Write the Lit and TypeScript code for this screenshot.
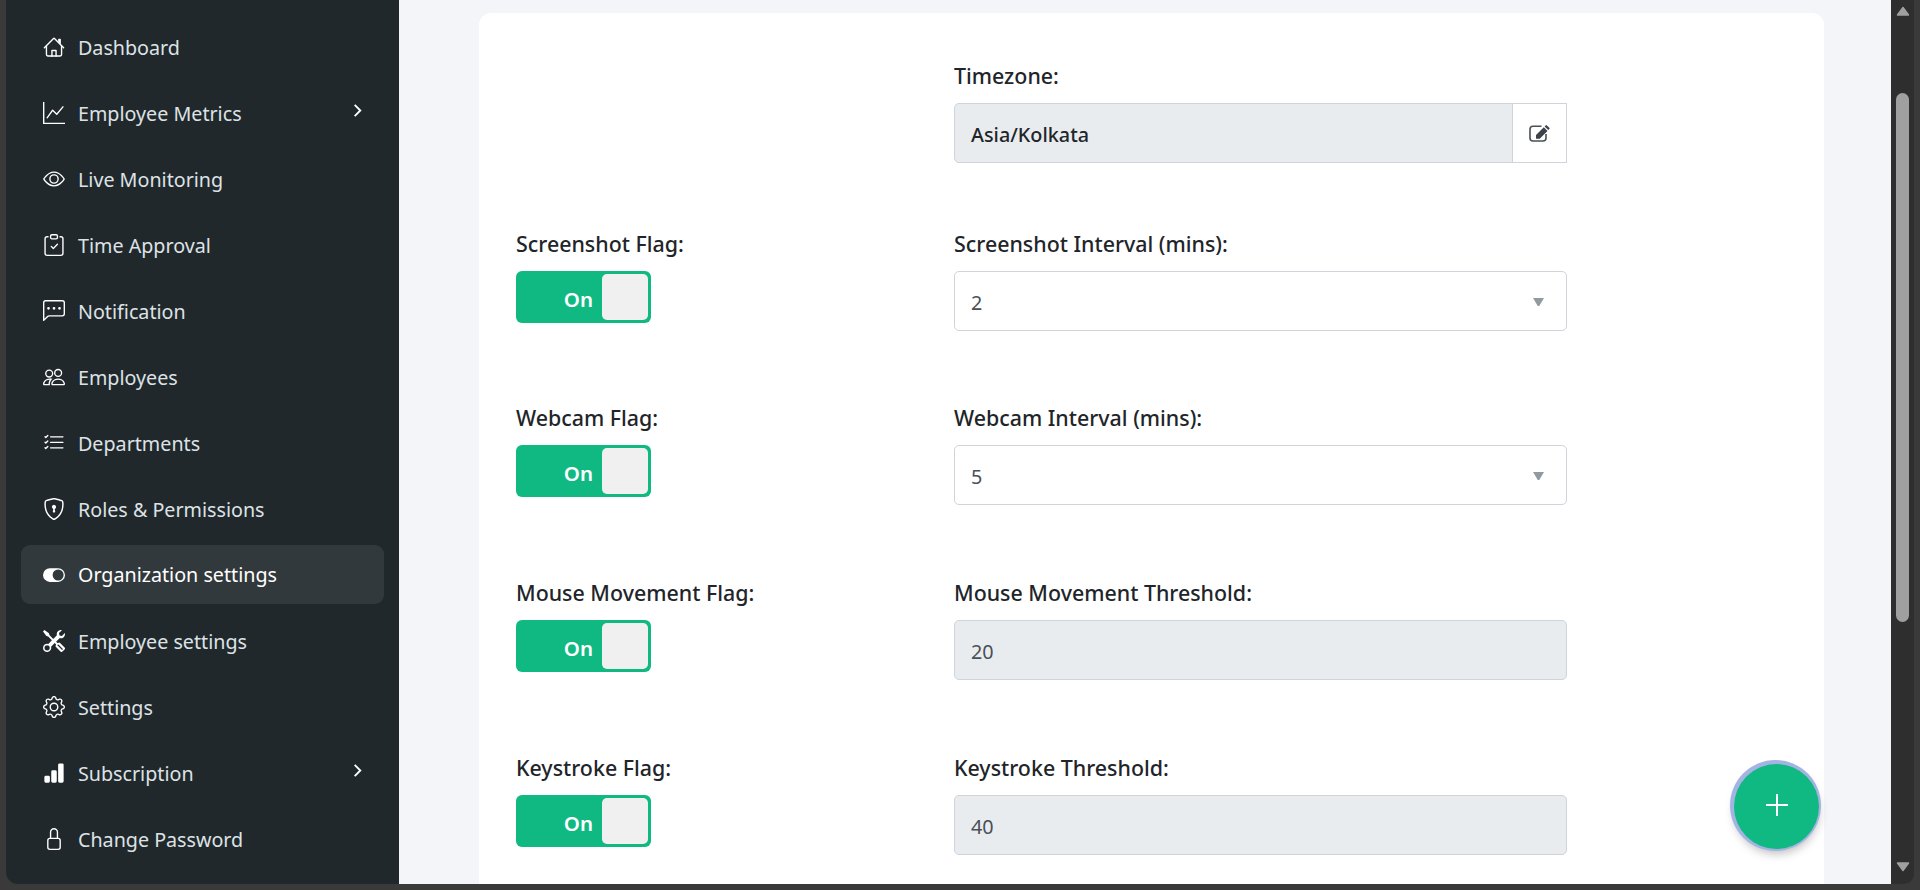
import { LitElement, css, html, svg } from "lit";
import { customElement } from "lit/decorators.js";

const icons: Record<string, unknown> = {
  house: svg`<path fill-rule="evenodd" d="M2 13.5V7h1v6.5a.5.5 0 0 0 .5.5h9a.5.5 0 0 0 .5-.5V7h1v6.5a1.5 1.5 0 0 1-1.5 1.5h-9A1.5 1.5 0 0 1 2 13.5zm11-11V6l-2-2V2.5a.5.5 0 0 1 .5-.5h1a.5.5 0 0 1 .5.5z"/><path fill-rule="evenodd" d="M7.293 1.5a1 1 0 0 1 1.414 0l6.647 6.646a.5.5 0 0 1-.708.708L8 2.207 1.354 8.854a.5.5 0 1 1-.708-.708L7.293 1.5z"/><path d="M6 15v-4.5a.5.5 0 0 1 .5-.5h3a.5.5 0 0 1 .5.5V15H9v-4H7v4z"/>`,
  graph: svg`<path fill-rule="evenodd" d="M0 0h1v15h15v1H0V0Zm14.817 3.113a.5.5 0 0 1 .07.704l-4.5 5.5a.5.5 0 0 1-.74.037L7.06 6.767l-3.656 5.027a.5.5 0 0 1-.808-.588l4-5.5a.5.5 0 0 1 .758-.06l2.609 2.61 4.15-5.073a.5.5 0 0 1 .704-.07Z"/>`,
  eye: svg`<path d="M16 8s-3-5.5-8-5.5S0 8 0 8s3 5.5 8 5.5S16 8 16 8zM1.173 8a13.133 13.133 0 0 1 1.66-2.043C4.12 4.668 5.88 3.5 8 3.5c2.12 0 3.879 1.168 5.168 2.457A13.133 13.133 0 0 1 14.828 8c-.058.087-.122.183-.195.288-.335.48-.83 1.12-1.465 1.755C11.879 11.332 10.119 12.5 8 12.5c-2.12 0-3.879-1.168-5.168-2.457A13.134 13.134 0 0 1 1.172 8z"/><path d="M8 5.5a2.5 2.5 0 1 0 0 5 2.5 2.5 0 0 0 0-5zM4.5 8a3.5 3.5 0 1 1 7 0 3.5 3.5 0 0 1-7 0z"/>`,
  clipboard: svg`<path fill-rule="evenodd" d="M10.854 7.146a.5.5 0 0 1 0 .708l-3 3a.5.5 0 0 1-.708 0l-1.5-1.5a.5.5 0 1 1 .708-.708L7.5 9.793l2.646-2.647a.5.5 0 0 1 .708 0z"/><path d="M4 1.5H3a2 2 0 0 0-2 2V14a2 2 0 0 0 2 2h10a2 2 0 0 0 2-2V3.5a2 2 0 0 0-2-2h-1v1h1a1 1 0 0 1 1 1V14a1 1 0 0 1-1 1H3a1 1 0 0 1-1-1V3.5a1 1 0 0 1 1-1h1v-1z"/><path d="M9.5 1a.5.5 0 0 1 .5.5v1a.5.5 0 0 1-.5.5h-3a.5.5 0 0 1-.5-.5v-1a.5.5 0 0 1 .5-.5h3zm-3-1A1.5 1.5 0 0 0 5 1.5v1A1.5 1.5 0 0 0 6.5 4h3A1.5 1.5 0 0 0 11 2.5v-1A1.5 1.5 0 0 0 9.5 0h-3z"/>`,
  chat: svg`<path d="M14 1a1 1 0 0 1 1 1v8a1 1 0 0 1-1 1H4.414A2 2 0 0 0 3 11.586l-2 2V2a1 1 0 0 1 1-1h12zM2 0a2 2 0 0 0-2 2v12.793a.5.5 0 0 0 .854.353l2.853-2.853A1 1 0 0 1 4.414 12H14a2 2 0 0 0 2-2V2a2 2 0 0 0-2-2H2z"/><path d="M5 6a1 1 0 1 1-2 0 1 1 0 0 1 2 0zm4 0a1 1 0 1 1-2 0 1 1 0 0 1 2 0zm4 0a1 1 0 1 1-2 0 1 1 0 0 1 2 0z"/>`,
  people: svg`<path d="M15 14s1 0 1-1-1-4-5-4-5 3-5 4 1 1 1 1h8Zm-7.978-1A.261.261 0 0 1 7 12.996c.001-.264.167-1.03.76-1.72C8.312 10.629 9.282 10 11 10c1.717 0 2.687.63 3.24 1.276.593.69.758 1.457.76 1.72l-.008.002a.274.274 0 0 1-.014.002H7.022ZM11 7a2 2 0 1 0 0-4 2 2 0 0 0 0 4Zm3-2a3 3 0 1 1-6 0 3 3 0 0 1 6 0ZM6.936 9.28a5.88 5.88 0 0 0-1.23-.247A7.35 7.35 0 0 0 5 9c-4 0-5 3-5 4 0 .667.333 1 1 1h4.216A2.238 2.238 0 0 1 5 13c0-1.01.377-2.042 1.09-2.904.243-.294.526-.569.846-.816ZM4.92 10A5.493 5.493 0 0 0 4 13H1c0-.26.164-1.03.76-1.724.545-.636 1.492-1.256 3.16-1.275ZM1.5 5.5a3 3 0 1 1 6 0 3 3 0 0 1-6 0Zm3-2a2 2 0 1 0 0 4 2 2 0 0 0 0-4Z"/>`,
  checklist: svg`<path fill-rule="evenodd" d="M5 11.5a.5.5 0 0 1 .5-.5h9a.5.5 0 0 1 0 1h-9a.5.5 0 0 1-.5-.5zm0-4a.5.5 0 0 1 .5-.5h9a.5.5 0 0 1 0 1h-9a.5.5 0 0 1-.5-.5zm0-4a.5.5 0 0 1 .5-.5h9a.5.5 0 0 1 0 1h-9a.5.5 0 0 1-.5-.5zM3.854 2.146a.5.5 0 0 1 0 .708l-1.5 1.5a.5.5 0 0 1-.708 0l-.5-.5a.5.5 0 1 1 .708-.708L2 3.293l1.146-1.147a.5.5 0 0 1 .708 0zm0 4a.5.5 0 0 1 0 .708l-1.5 1.5a.5.5 0 0 1-.708 0l-.5-.5a.5.5 0 1 1 .708-.708L2 7.293l1.146-1.147a.5.5 0 0 1 .708 0zm0 4a.5.5 0 0 1 0 .708l-1.5 1.5a.5.5 0 0 1-.708 0l-.5-.5a.5.5 0 0 1 .708-.708l.146.147 1.146-1.147a.5.5 0 0 1 .708 0z"/>`,
  shield: svg`<path d="M5.338 1.59a61.44 61.44 0 0 0-2.837.856.481.481 0 0 0-.328.39c-.554 4.157.726 7.19 2.253 9.188a10.725 10.725 0 0 0 2.287 2.233c.346.244.652.42.893.533.12.057.218.095.293.118a.55.55 0 0 0 .101.025.615.615 0 0 0 .1-.025c.076-.023.174-.061.294-.118.24-.113.547-.29.893-.533a10.726 10.726 0 0 0 2.287-2.233c1.527-1.997 2.807-5.031 2.253-9.188a.48.48 0 0 0-.328-.39c-.651-.213-1.75-.56-2.837-.855C9.552 1.29 8.531 1.067 8 1.067c-.53 0-1.552.223-2.662.524zM5.072.56C6.157.265 7.31 0 8 0s1.843.265 2.928.56c1.11.3 2.229.655 2.887.87a1.54 1.54 0 0 1 1.044 1.262c.596 4.477-.787 7.795-2.465 9.99a11.775 11.775 0 0 1-2.517 2.453 7.159 7.159 0 0 1-1.048.625c-.28.132-.581.24-.829.24s-.548-.108-.829-.24a7.158 7.158 0 0 1-1.048-.625 11.777 11.777 0 0 1-2.517-2.453C1.928 10.487.545 7.169 1.141 2.692A1.54 1.54 0 0 1 2.185 1.43 62.456 62.456 0 0 1 5.072.56z"/><path d="M9.5 6.5a1.5 1.5 0 0 1-1 1.415l.385 1.99a.5.5 0 0 1-.491.595h-.788a.5.5 0 0 1-.49-.595l.384-1.99a1.5 1.5 0 1 1 2-1.415z"/>`,
  toggle: svg`<path d="M5 3a5 5 0 0 0 0 10h6a5 5 0 0 0 0-10H5zm6 9a4 4 0 1 1 0-8 4 4 0 0 1 0 8z"/>`,
  tools: svg`<path d="M1 0 0 1l2.2 3.081a1 1 0 0 0 .815.419h.07a1 1 0 0 1 .708.293l2.675 2.675-2.617 2.654A3.003 3.003 0 0 0 0 13a3 3 0 1 0 5.878-.851l2.654-2.617.968.968-.305.914a1 1 0 0 0 .242 1.023l3.27 3.27a.997.997 0 0 0 1.414 0l1.586-1.586a.997.997 0 0 0 0-1.414l-3.27-3.27a1 1 0 0 0-1.023-.242L10.5 9.5l-.96-.96 2.68-2.643A3.005 3.005 0 0 0 16 3c0-.269-.035-.53-.102-.777l-2.14 2.141L12 4l-.364-1.757L13.777.102a3 3 0 0 0-3.675 3.68L7.462 6.46 4.793 3.793a1 1 0 0 1-.293-.707v-.071a1 1 0 0 0-.419-.814L1 0Zm9.646 10.646a.5.5 0 0 1 .708 0l2.914 2.915a.5.5 0 0 1-.707.707l-2.915-2.914a.5.5 0 0 1 0-.708ZM3 11l.471.242.529.026.287.445.445.287.026.529L5 13l-.242.471-.026.529-.445.287-.287.445-.529.026L3 15l-.471-.242L2 14.732l-.287-.445L1.268 14l-.026-.529L1 13l.242-.471.026-.529.445-.287.287-.445.529-.026L3 11Z"/>`,
  gear: svg`<path d="M8 4.754a3.246 3.246 0 1 0 0 6.492 3.246 3.246 0 0 0 0-6.492zM5.754 8a2.246 2.246 0 1 1 4.492 0 2.246 2.246 0 0 1-4.492 0z"/><path d="M9.796 1.343c-.527-1.79-3.065-1.79-3.592 0l-.094.319a.873.873 0 0 1-1.255.52l-.292-.16c-1.64-.892-3.433.902-2.54 2.541l.159.292a.873.873 0 0 1-.52 1.255l-.319.094c-1.79.527-1.79 3.065 0 3.592l.319.094a.873.873 0 0 1 .52 1.255l-.16.292c-.892 1.64.901 3.434 2.541 2.54l.292-.159a.873.873 0 0 1 1.255.52l.094.319c.527 1.79 3.065 1.79 3.592 0l.094-.319a.873.873 0 0 1 1.255-.52l.292.16c1.64.893 3.434-.902 2.54-2.541l-.159-.292a.873.873 0 0 1 .52-1.255l.319-.094c1.79-.527 1.79-3.065 0-3.592l-.319-.094a.873.873 0 0 1-.52-1.255l.16-.292c.893-1.64-.902-3.433-2.541-2.54l-.292.159a.873.873 0 0 1-1.255-.52l-.094-.319zm-2.633.283c.246-.835 1.428-.835 1.674 0l.094.319a1.873 1.873 0 0 0 2.693 1.115l.291-.16c.764-.415 1.6.42 1.184 1.185l-.159.292a1.873 1.873 0 0 0 1.116 2.692l.318.094c.835.246.835 1.428 0 1.674l-.319.094a1.873 1.873 0 0 0-1.115 2.693l.16.291c.415.764-.42 1.6-1.185 1.184l-.291-.159a1.873 1.873 0 0 0-2.693 1.116l-.094.318c-.246.835-1.428.835-1.674 0l-.094-.319a1.873 1.873 0 0 0-2.692-1.115l-.292.16c-.764.415-1.6-.42-1.184-1.185l.159-.291A1.873 1.873 0 0 0 1.945 8.93l-.319-.094c-.835-.246-.835-1.428 0-1.674l.319-.094A1.873 1.873 0 0 0 3.06 4.377l-.16-.292c-.415-.764.42-1.6 1.185-1.184l.292.159a1.873 1.873 0 0 0 2.692-1.115l.094-.319z"/>`,
  bars: svg`<path d="M1 11a1 1 0 0 1 1-1h2a1 1 0 0 1 1 1v3a1 1 0 0 1-1 1H2a1 1 0 0 1-1-1v-3zm5-4a1 1 0 0 1 1-1h2a1 1 0 0 1 1 1v7a1 1 0 0 1-1 1H7a1 1 0 0 1-1-1V7zm5-5a1 1 0 0 1 1-1h2a1 1 0 0 1 1 1v12a1 1 0 0 1-1 1h-2a1 1 0 0 1-1-1V2z"/>`,
  lock: svg`<path d="M8 1a2 2 0 0 1 2 2v4H6V3a2 2 0 0 1 2-2zm3 6V3a3 3 0 0 0-6 0v4a2 2 0 0 0-2 2v5a2 2 0 0 0 2 2h6a2 2 0 0 0 2-2V9a2 2 0 0 0-2-2zM5 8h6a1 1 0 0 1 1 1v5a1 1 0 0 1-1 1H5a1 1 0 0 1-1-1V9a1 1 0 0 1 1-1z"/>`,
};

const menu = [
  { icon: "house", label: "Dashboard" },
  { icon: "graph", label: "Employee Metrics", more: true },
  { icon: "eye", label: "Live Monitoring" },
  { icon: "clipboard", label: "Time Approval" },
  { icon: "chat", label: "Notification" },
  { icon: "people", label: "Employees" },
  { icon: "checklist", label: "Departments" },
  { icon: "shield", label: "Roles & Permissions" },
  { icon: "toggle", label: "Organization settings", active: true },
  { icon: "tools", label: "Employee settings" },
  { icon: "gear", label: "Settings" },
  { icon: "bars", label: "Subscription", more: true },
  { icon: "lock", label: "Change Password" },
];

const rows = [
  { flag: "Screenshot Flag:", label: "Screenshot Interval (mins):", value: "2", select: true },
  { flag: "Webcam Flag:", label: "Webcam Interval (mins):", value: "5", select: true },
  { flag: "Mouse Movement Flag:", label: "Mouse Movement Threshold:", value: "20" },
  { flag: "Keystroke Flag:", label: "Keystroke Threshold:", value: "40" },
];

@customElement("app-root")
export class AppRoot extends LitElement {
  static styles = css`
    :host {
      display: block;
      height: 890px;
      overflow: hidden;
      background: #3a3a3a;
      font-family: "Noto Sans", "Open Sans", sans-serif;
    }

    .window {
      display: flex;
      height: 884px;
      padding-left: 6px;
      padding-right: 6px;
    }

    .sidebar {
      width: 393px;
      flex: none;
      box-sizing: border-box;
      background: #20282b;
      border-bottom-left-radius: 12px;
      padding: 14px 15px 0;
      display: flex;
      flex-direction: column;
    }

    .item {
      height: 66px;
      flex: none;
      display: flex;
      align-items: center;
      box-sizing: border-box;
      padding: 0 19px 0 22px;
      color: #dee2e6;
      font-size: 19.7px;
      border-radius: 9px;
    }

    .item.active {
      height: 59px;
      margin: 3px 0 4px;
      background: #32393c;
      color: #fff;
    }

    .item svg.ico {
      width: 22px;
      height: 22px;
      flex: none;
      margin-right: 13px;
      fill: #fff;
    }

    .item span {
      flex: 1;
    }

    .item svg.more {
      width: 15px;
      height: 15px;
      flex: none;
      fill: none;
      stroke: #fff;
      stroke-width: 2;
      margin-top: -6px;
    }

    .main {
      flex: 1;
      min-width: 0;
      position: relative;
      background: #f3f5f9;
      padding: 13px 67px 0 80px;
      overflow: hidden;
    }

    .card {
      background: #fff;
      border-radius: 12px;
      height: 1000px;
      padding: 51px 0 0 37px;
      box-sizing: border-box;
    }

    .row {
      display: flex;
      height: 175px;
    }

    .row.first {
      height: 168px;
    }

    .row:nth-child(2) {
      height: 174px;
    }

    .left {
      width: 438px;
      flex: none;
    }

    .right {
      width: 613px;
      flex: none;
    }

    label {
      display: block;
      height: 39px;
      line-height: 24px;
      font-size: 21.4px;
      font-weight: 500;
      color: #212529;
      white-space: nowrap;
    }

    .toggle {
      width: 135px;
      height: 52px;
      box-sizing: border-box;
      background: #10b981;
      border-radius: 6px;
      padding: 3px;
      display: flex;
      justify-content: flex-end;
      align-items: center;
      gap: 9px;
      color: #fff;
      font-size: 20.5px;
      font-weight: 600;
      line-height: 48px;
    }

    .toggle span {
      padding-top: 3px;
    }

    .knob {
      width: 46px;
      height: 46px;
      background: #f0f0f0;
      border-radius: 5px;
    }

    .control {
      height: 60px;
      box-sizing: border-box;
      border: 1px solid #ced4da;
      border-radius: 5px;
      padding: 2px 16px 0;
      display: flex;
      align-items: center;
      justify-content: space-between;
      font-size: 19.8px;
      color: #495057;
    }

    .control.off {
      background: #e9ecef;
    }

    .caret {
      width: 11px;
      height: 8px;
      margin-right: 6px;
      fill: #8f9aa3;
    }

    .group {
      display: flex;
      height: 60px;
    }

    .group .control {
      flex: 1;
      border-radius: 5px 0 0 5px;
      font-weight: 500;
      color: #212529;
    }

    .addon {
      width: 55px;
      flex: none;
      box-sizing: border-box;
      margin-left: -1px;
      border: 1px solid #ced4da;
      display: flex;
      align-items: center;
      justify-content: center;
    }

    .addon svg {
      width: 21px;
      height: 17px;
    }

    .fab {
      position: absolute;
      left: 1335px;
      top: 764px;
      width: 85px;
      height: 85px;
      border-radius: 50%;
      background: #10b981;
      box-shadow: -1px -1px 0 3px #a3b4e2, 0 5px 10px rgba(0, 0, 0, 0.25);
      display: flex;
      align-items: center;
      justify-content: center;
    }

    .fab svg {
      width: 22px;
      height: 22px;
      stroke: #fff;
      stroke-width: 2;
      margin-bottom: 3px;
    }

    .scrollbar {
      width: 23px;
      flex: none;
      background: #2e2e2e;
      border-bottom-right-radius: 10px;
      position: relative;
    }

    .arrow {
      position: absolute;
      left: 5px;
      width: 14px;
      height: 10px;
      fill: #a0a0a0;
      stroke: #a0a0a0;
      stroke-width: 1.5;
      stroke-linejoin: round;
    }

    .arrow.up {
      top: 6px;
    }

    .arrow.down {
      top: 862px;
    }

    .thumb {
      position: absolute;
      left: 5px;
      top: 93px;
      width: 13px;
      height: 529px;
      border-radius: 7px;
      background: #a0a0a0;
    }
  `;

  private renderItem(item: (typeof menu)[number]) {
    return html`<div class="item ${item.active ? "active" : ""}">
      <svg class="ico" viewBox="0 0 16 16">${icons[item.icon]}</svg>
      <span>${item.label}</span>
      ${item.more
        ? html`<svg class="more" viewBox="0 0 16 16"><path d="M5 2l6 6-6 6" /></svg>`
        : ""}
    </div>`;
  }

  private renderRow(row: (typeof rows)[number]) {
    return html`<div class="row">
      <div class="left">
        <label>${row.flag}</label>
        <div class="toggle"><span>On</span><div class="knob"></div></div>
      </div>
      <div class="right">
        <label>${row.label}</label>
        <div class="control ${row.select ? "" : "off"}">
          ${row.value}${row.select
            ? html`<svg class="caret" viewBox="0 0 11 8"><path d="M0 0h11L6.500 7.400a1 1 0 0 1-2 0z" /></svg>`
            : ""}
        </div>
      </div>
    </div>`;
  }

  render() {
    return html`<div class="window">
      <nav class="sidebar">${menu.map((item) => this.renderItem(item))}</nav>
      <main class="main">
        <div class="card">
          <div class="row first">
            <div class="left"></div>
            <div class="right">
              <label>Timezone:</label>
              <div class="group">
                <div class="control off">Asia/Kolkata</div>
                <div class="addon">
                  <svg viewBox="0 0 21 17">
                    <path d="M12.5 1.2H4A3 3 0 0 0 1 4.2V13a3 3 0 0 0 3 3h10a3 3 0 0 0 3-3V9" fill="none" stroke="#495057" stroke-width="1.6" />
                    <path d="M16.6.4a1 1 0 0 1 1.3 0l2.4 2.4a1 1 0 0 1 0 1.3l-1 1-3.700-3.700zM14.800 2.200l3.700 3.700-7.800 7.800H7v-3.700z" fill="#3d4349" />
                  </svg>
                </div>
              </div>
            </div>
          </div>
          ${rows.map((row) => this.renderRow(row))}
        </div>
        <div class="fab">
          <svg viewBox="0 0 22 22"><path d="M11 0v22M0 11h22" /></svg>
        </div>
      </main>
      <div class="scrollbar">
        <svg class="arrow up" viewBox="0 0 14 10"><path d="M7 1.500L12.500 9h-11z" /></svg>
        <div class="thumb"></div>
        <svg class="arrow down" viewBox="0 0 14 10"><path d="M1.500 1h11L7 8.500z" /></svg>
      </div>
    </div>`;
  }
}
